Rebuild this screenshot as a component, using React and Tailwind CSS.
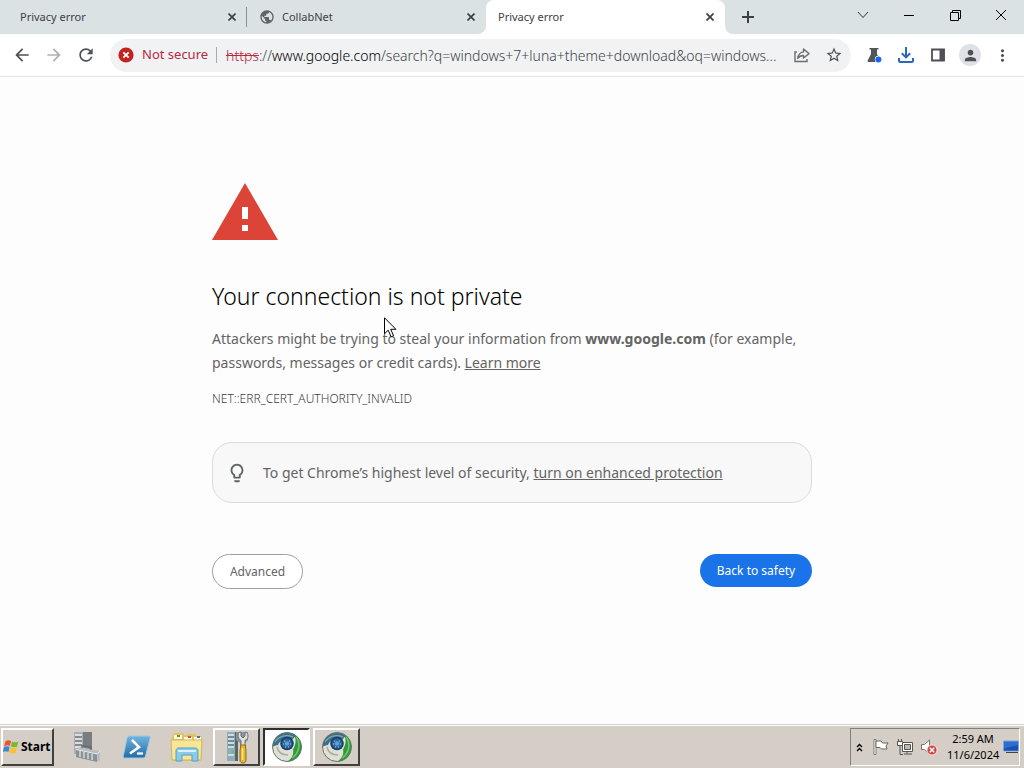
import { useState } from 'react'
import {
  MdArrowBack,
  MdArrowForward,
  MdLightbulbOutline,
  MdMoreVert,
  MdPerson,
  MdPublic,
  MdRefresh,
  MdStarBorder,
} from 'react-icons/md'

const TABS = [
  { id: 1, title: 'Privacy error' },
  { id: 2, title: 'CollabNet', icon: true },
  { id: 3, title: 'Privacy error' },
]

const URL_TEXT = 'https://www.google.com/search?q=windows+7+luna+theme+download&oq=windows+7+luna'

function CloseIcon() {
  return (
    <svg width="8" height="8" viewBox="0 0 8 8" fill="none" stroke="currentColor" strokeWidth="1.7">
      <path d="m.5.5 7 7m0-7-7 7" />
    </svg>
  )
}

function PlusIcon() {
  return (
    <svg width="12" height="12" viewBox="0 0 12 12" fill="none" stroke="currentColor" strokeWidth="2">
      <path d="M6 0v12M0 6h12" />
    </svg>
  )
}

function ShareIcon() {
  return (
    <svg width="18" height="18" viewBox="0 0 18 18" fill="none" stroke="#6b6e72" strokeWidth="1.4">
      <path d="M4 6H2v9.5h12V13" />
      <path d="M10.5 3 16 7.6l-5.5 4.4V9.5c-2.6 0-4.4.8-5.8 2.9.5-3.6 2.3-6 5.8-6.5z" strokeLinejoin="round" />
    </svg>
  )
}

function FlaskIcon() {
  return (
    <svg width="18" height="18" viewBox="0 0 18 18">
      <path d="M4.5 2h9v1.6H12V8l3.300 6.500c.4.900 0 1.500-1 1.500H3.700c-1 0-1.400-.6-1-1.500L6 8V3.600H4.500z" fill="#50565c" />
      <circle cx="13.4" cy="13.4" r="3.6" fill="#fff" />
      <circle cx="13.4" cy="13.4" r="3" fill="#1a66e8" />
    </svg>
  )
}

function DownloadIcon() {
  return (
    <svg width="18" height="18" viewBox="0 0 18 18" fill="none" stroke="#2c67b8" strokeWidth="2">
      <path d="M9 1v10M4.8 7.200 9 11.400l4.200-4.200" />
      <path d="M2 12v2.800c0 .7.4 1.200 1.200 1.200h11.600c.8 0 1.200-.5 1.200-1.200V12" />
    </svg>
  )
}

function PanelIcon() {
  return (
    <svg width="16" height="16" viewBox="0 0 16 16">
      <path d="M2 2.500h12v11H2z" fill="none" stroke="#4d5156" strokeWidth="1.8" />
      <path d="M9.500 2h5v12h-5z" fill="#4d5156" />
    </svg>
  )
}

function CertErrorIcon() {
  return (
    <svg width="16" height="16" viewBox="0 0 16 16">
      <circle cx="8" cy="8" r="7.600" fill="#c5221f" />
      <path d="m5.300 5.300 5.400 5.400m0-5.400-5.400 5.400" stroke="#fff" strokeWidth="1.800" />
    </svg>
  )
}

function Tab({ tab, active, onSelect }) {
  return (
    <div
      className={`relative flex h-[34px] min-w-0 max-w-[239px] flex-1 items-center pl-3 pr-[7px] ${
        active ? 'rounded-t-lg bg-white' : ''
      }`}
    >
      <button
        role="tab"
        aria-selected={active}
        onClick={() => onSelect(tab.id)}
        className="flex h-full min-w-0 flex-1 items-center gap-[7px] text-left text-[11px] text-[#3c4043]"
      >
        {tab.icon && <MdPublic size={16} className="shrink-0 text-[#5f6368]" />}
        <span className="truncate">{tab.title}</span>
      </button>
      <button aria-label={`Close ${tab.title}`} className="flex size-4 items-center justify-center text-[#3c4043]">
        <CloseIcon />
      </button>
      {tab.id === 1 && !active && <span className="absolute right-0 top-[7px] h-5 w-px bg-[#8a9094]" />}
      {active && (
        <>
          <svg className="absolute -left-2 bottom-0" width="8" height="8" viewBox="0 0 8 8">
            <path d="M8 0v8H0a8 8 0 0 0 8-8z" fill="#fff" />
          </svg>
          <svg className="absolute -right-2 bottom-0" width="8" height="8" viewBox="0 0 8 8">
            <path d="M0 0v8h8a8 8 0 0 1-8-8z" fill="#fff" />
          </svg>
        </>
      )}
    </div>
  )
}

function TabStrip() {
  const [activeTab, setActiveTab] = useState(3)

  return (
    <header className="flex h-[34px] bg-[#dbe2e4] pl-2">
      <div role="tablist" className="flex min-w-0 flex-1">
        {TABS.map((tab) => (
          <Tab key={tab.id} tab={tab} active={tab.id === activeTab} onSelect={setActiveTab} />
        ))}
        <button aria-label="New tab" className="ml-[9px] flex w-7 items-center justify-center text-[#3c4043]">
          <PlusIcon />
        </button>
      </div>
      <div className="flex h-[30px]">
        <button aria-label="Search tabs" className="flex w-[46px] items-center justify-center">
          <svg width="12" height="8" viewBox="0 0 12 8" fill="none" stroke="#333">
            <path d="m1 1 5 5.500L11 1" />
          </svg>
        </button>
        <button aria-label="Minimize" className="flex w-[46px] items-center justify-center">
          <span className="h-px w-[10px] bg-black" />
        </button>
        <button aria-label="Restore" className="flex w-[46px] items-center justify-center">
          <svg width="11" height="11" viewBox="0 0 11 11" fill="none" stroke="#000">
            <path d="M.5 2.500h8v8h-8zM2.500 2.500v-2h8v8h-2" />
          </svg>
        </button>
        <button aria-label="Close window" className="flex w-[46px] items-center justify-center">
          <svg width="12" height="12" viewBox="0 0 12 12" fill="none" stroke="#000">
            <path d="m1 1 10 10M11 1 1 11" />
          </svg>
        </button>
      </div>
    </header>
  )
}

function ToolButton({ label, children, className = '' }) {
  return (
    <button
      aria-label={label}
      className={`flex size-7 shrink-0 items-center justify-center rounded-full text-[#4d5156] ${className}`}
    >
      {children}
    </button>
  )
}

function AddressBar() {
  const [editing, setEditing] = useState(false)

  return (
    <div className="ml-[6px] mr-[5px] flex h-[33px] min-w-0 flex-1 items-center rounded-full bg-[#f1f2f3] pl-2 pr-[3px] text-[14px]">
      <button className="flex shrink-0 items-center gap-2 text-[13px] text-[#b8293a]">
        <CertErrorIcon />
        Not secure
      </button>
      <span className="ml-2 mr-[9px] h-4 w-px shrink-0 bg-[#b0a8aa]" />
      {editing ? (
        <input
          autoFocus
          aria-label="Address"
          defaultValue={URL_TEXT}
          onBlur={() => setEditing(false)}
          className="min-w-0 flex-1 bg-transparent font-light outline-none"
        />
      ) : (
        <button
          onClick={() => setEditing(true)}
          className="min-w-0 flex-1 truncate text-left font-light text-[#404448]"
        >
          <span className="text-[#b8293a] line-through">https</span>
          ://<span className="text-black">www.google.com</span>
          /search?q=windows+7+luna+theme+download&oq=windows...
        </button>
      )}
      <div className="flex gap-1">
        <ToolButton label="Share">
          <ShareIcon />
        </ToolButton>
        <ToolButton label="Bookmark">
          <MdStarBorder size={18} />
        </ToolButton>
      </div>
    </div>
  )
}

function Toolbar() {
  return (
    <div className="flex h-[43px] items-center gap-1 border-b border-[#e4e6e8] bg-white px-2">
      <ToolButton label="Back">
        <MdArrowBack size={20} />
      </ToolButton>
      <ToolButton label="Forward" className="opacity-45">
        <MdArrowForward size={20} />
      </ToolButton>
      <ToolButton label="Reload">
        <MdRefresh size={20} />
      </ToolButton>
      <AddressBar />
      <ToolButton label="Labs">
        <FlaskIcon />
      </ToolButton>
      <ToolButton label="Downloads">
        <DownloadIcon />
      </ToolButton>
      <ToolButton label="Side panel">
        <PanelIcon />
      </ToolButton>
      <ToolButton label="Profile">
        <span className="flex size-[22px] items-center justify-center rounded-full bg-[#dfe1e6]">
          <MdPerson size={17} />
        </span>
      </ToolButton>
      <ToolButton label="Menu">
        <MdMoreVert size={19} />
      </ToolButton>
    </div>
  )
}

function Cursor() {
  return (
    <svg className="absolute left-[172px] top-[134px]" width="13" height="21" viewBox="0 0 13 21">
      <path d="M.5.8v16l3.700-3.600 2.900 6.600 2.500-1.100-2.900-6.400h5.200z" fill="#fff" stroke="#000" />
    </svg>
  )
}

function PrivacyError() {
  return (
    <main className="flex-1 bg-[#fdfdfd] px-6 pt-[106px] text-[#646464]">
      <div className="relative mx-auto max-w-[600px]">
        <svg width="66" height="57" viewBox="0 0 66 57">
          <path d="M33 0 66 57H0z" fill="#db4437" />
          <path d="M30 24h6v12h-6zM30 42h6v6h-6z" fill="#fff" />
        </svg>
        <h1 className="mt-10 text-[23px] font-light leading-8 text-black">Your connection is not private</h1>
        <p className="mt-[15px] text-[14px] leading-6">
          Attackers might be trying to steal your information from <strong>www.google.com</strong> (for example,
          passwords, messages or credit cards).{' '}
          <a href="#learn-more" className="underline">
            Learn more
          </a>
        </p>
        <p className="mt-[14px] text-[12px] font-light leading-5 text-[#404040]">NET::ERR_CERT_AUTHORITY_INVALID</p>
        <div className="mt-[33px] flex min-h-[61px] items-center gap-[15px] rounded-[20px] border border-[#dadce0] bg-[#f8f8f8] px-[13px]">
          <MdLightbulbOutline size={22} className="shrink-0 text-[#5f6368]" />
          <p className="text-[14px] leading-6">
            To get Chrome’s highest level of security,{' '}
            <a href="#enhanced-protection" className="underline">
              turn on enhanced protection
            </a>
          </p>
        </div>
        <div className="mt-[51px] flex items-start justify-between text-[12px]">
          <button className="h-[35px] min-w-[91px] rounded-full border border-[#9d9fa3] bg-white px-4">Advanced</button>
          <button className="h-[33px] min-w-[112px] rounded-full bg-[#1a73e8] px-4 text-white">Back to safety</button>
        </div>
        <Cursor />
      </div>
    </main>
  )
}

function WindowsLogo() {
  return (
    <svg width="17" height="16" viewBox="0 0 17 16">
      <path d="M2.500 2.200C4.400.8 6.100.9 8 2L6.800 7C5 6 3.300 6 1.200 7.200z" fill="#e8552a" />
      <path d="M8.900 2.400c2 1.100 4 1.200 6.600 0L14.200 7.400c-2.200 1.100-4.300 1-6.500 0z" fill="#7cb832" />
      <path d="M1 8.100c2-1.200 3.700-1.200 5.600-.1L5.400 13C3.700 12 1.900 11.900 0 13.100z" fill="#3b86d0" />
      <path d="M7.500 8.500c2 1.100 4.200 1.200 6.500 0l-1.300 5.200c-2.300 1.100-4.300 1-6.500-.1z" fill="#fcc22c" />
    </svg>
  )
}

function ServerIcon() {
  return (
    <svg width="30" height="32" viewBox="0 0 30 32">
      <path d="M2 1h9v22H2z" fill="#a9aeb1" />
      <path d="M11 1h9v17h-9z" fill="#777d81" />
      <path d="M3 4h7M3 8h7M3 12h7M3 16h7" stroke="#eceeef" strokeWidth="1.600" />
      <path d="M3 6h7M3 10h7M3 14h7" stroke="#62696e" />
      <path d="M4 18.500 8 16l20 4v9l-3 2-21-5z" fill="#b9bec1" />
      <path d="m4 18.500 21 4.500v8L4 26z" fill="#8b9296" />
      <path d="m4 18.500 21 4.500 3-3" fill="none" stroke="#e8eaeb" />
      <path d="M8 20v6M12 21v6M16 22v6M20 23v6" stroke="#dfe2e3" strokeWidth="1.300" />
      <path d="M10 17v-2.500l9 1.500v3" fill="none" stroke="#666d71" strokeWidth="1.400" />
    </svg>
  )
}

function PowerShellIcon() {
  return (
    <svg width="30" height="26" viewBox="0 0 30 26">
      <defs>
        <linearGradient id="ps" x1="0" y1="0" x2="0" y2="1">
          <stop offset="0" stopColor="#72b4dc" />
          <stop offset="1" stopColor="#216da9" />
        </linearGradient>
      </defs>
      <path d="M6.500 2h20c1.300 0 2 .9 1.700 2.100l-4.700 18c-.3 1.200-1.300 1.900-2.500 1.900H3c-1.300 0-2-.9-1.700-2.100L5 4z" fill="url(#ps)" stroke="#9ccbe6" />
      <path d="m10 6 7 7-9 6.500" fill="none" stroke="#fff" strokeWidth="2.600" />
      <path d="M15 19.500h6" stroke="#fff" strokeWidth="2.200" />
    </svg>
  )
}

function ExplorerIcon() {
  return (
    <svg width="34" height="32" viewBox="0 0 34 32">
      <path d="M2 6 4 2h9l2 3 3-2h7l2 2h5v22l-2 3H2z" fill="#e3c260" />
      <path d="M4 4h8v4H4zM14 6h8v3h-8zM24 6h7v3h-7z" fill="#fff7da" />
      <path d="M7 4h3v2H7z" fill="#4f9b57" />
      <path d="M18 5h3v2h-3z" fill="#c9534a" />
      <path d="M27 5h3v2h-3z" fill="#3c78b5" />
      <path d="M1 9h31l-1 20H2z" fill="#f8e697" stroke="#d2b65a" />
      <path d="M6 30V20c0-2 1-3 3-3h16c2 0 3 1 3 3v10h-6v-6H12v6z" fill="#89cbe9" stroke="#569dc4" />
      <path d="M8 20h18" stroke="#d6f2fb" strokeWidth="2" />
    </svg>
  )
}

function ServerManagerIcon() {
  return (
    <svg width="26" height="34" viewBox="0 0 26 34">
      <path d="M3 2h8v29H3z" fill="#8fadb9" />
      <path d="M11 2h3v29h-3z" fill="#56646c" />
      <path d="M4 5h6M4 9h6M4 13h6M4 17h6M4 25h6" stroke="#e2ecef" strokeWidth="1.600" />
      <path d="M4 7h6M4 11h6M4 15h6" stroke="#4a6672" />
      <circle cx="9" cy="22" r="1.300" fill="#71c04b" />
      <path d="M12 2h12v8l-3 3v4h-5v-4l-4-3z" fill="#8f9496" />
      <path d="M14 5c0-2 1-3 3-3v4l2 2 2-2V2c2 0 3 2 3 4 0 2-1 3.500-3 4.500V16h-4v-5.500c-2-1-3-3-3-5.500z" fill="#dfe1e2" stroke="#666d70" />
      <path d="M16.500 15h5v3l.5 2v10c0 2-1.200 3-3 3s-3-1-3-3V20l.5-2z" fill="#e8b52c" stroke="#8e6c18" />
      <path d="M18.500 18v12" stroke="#fce78c" strokeWidth="1.500" />
    </svg>
  )
}

function CollabNetIcon() {
  return (
    <svg width="32" height="32" viewBox="0 0 32 32">
      <circle cx="16" cy="16" r="14.500" fill="#e0e0d6" />
      <path d="M1.500 16C1.500 8 8 1.500 16 1.500c4 0 7 1 9 3L21 9C14 7 9 9 7 14c-2 0-4 1-5.500 2z" fill="#3c6f88" />
      <path d="M4 11c4-6 11-8 18-5" fill="none" stroke="#80a9b7" strokeWidth="1.200" />
      <path d="M23 3.200c5 3 7.500 7.500 7.500 12.800 0 8-6 14.500-14 14.500 5-3.500 6.500-8 5.500-12 3-5 3.500-10 1-15.300z" fill="#2e9a3c" />
      <path d="M25.500 6c4 7 3 15-4 21" fill="none" stroke="#73c46b" strokeWidth="1.600" />
      <path d="M6 16c1 5 5 8 11 8" fill="none" stroke="#a9aca0" strokeWidth="1.400" />
      <circle cx="16" cy="16" r="14.500" fill="none" stroke="#66756c" />
      <circle cx="16" cy="12.500" r="6.800" fill="#173f6b" />
      <circle cx="16" cy="12.500" r="5" fill="#2b669f" />
      <circle cx="16" cy="12.500" r="2.200" fill="#64a2cd" />
      <path d="M13 10h1M18 10h1M12 13h1M19 13h1M14 16h1M17 16h1" stroke="#a6d0e8" />
    </svg>
  )
}

const RAISED = 'border-2 border-t-white border-l-white border-b-[#404040] border-r-[#404040]'

const TASKS = [
  { name: 'Server', icon: ServerIcon, style: '' },
  { name: 'PowerShell', icon: PowerShellIcon, style: '' },
  { name: 'Explorer', icon: ExplorerIcon, style: '' },
  { name: 'Server Manager', icon: ServerManagerIcon, style: RAISED },
  {
    name: 'Browser',
    icon: CollabNetIcon,
    style: 'bg-white border-2 border-t-[#303030] border-l-[#303030] border-b-white border-r-white',
  },
  { name: 'Browser 2', icon: CollabNetIcon, style: RAISED },
]

function Tray() {
  return (
    <div className="ml-auto mr-1 flex items-center border border-b-white border-l-[#808080] border-r-white border-t-[#808080] pl-1 text-[11px] text-black">
      <button aria-label="Show hidden icons" className="flex w-2 justify-center">
        <svg width="7" height="9" viewBox="0 0 7 9" fill="none" stroke="#000" strokeWidth="1.300">
          <path d="m1 4 2.500-2.500L6 4M1 8l2.500-2.500L6 8" />
        </svg>
      </button>
      <button aria-label="Action center" className="ml-2 flex w-5 justify-center">
        <svg width="18" height="18" viewBox="0 0 18 18">
          <path d="M2 1.500h2v15H2z" fill="#fff" stroke="#686460" strokeWidth=".8" />
          <path d="M4 3h5l1.500 2H16l-2 3 1 3H9.500L8 9.500H4z" fill="#fff" stroke="#686460" />
        </svg>
      </button>
      <button aria-label="Network" className="ml-1 flex w-5 justify-center">
        <svg width="18" height="18" viewBox="0 0 18 18" stroke="#55524f" fill="#fff">
          <path d="M6.500 4.500h10v9h-10z" />
          <path d="M8.500 6.500h6v5h-6z" fill="#bdb9b4" />
          <path d="M11 13.500v2M8 16h8" />
          <path d="M1.500 3.500h5v4h-5zM2.500 1v2M5.500 1v2" />
          <path d="M4 7.500v9h3" fill="none" />
        </svg>
      </button>
      <button aria-label="Volume muted" className="ml-1 flex w-5 justify-center">
        <svg width="18" height="18" viewBox="0 0 18 18">
          <path d="M1.500 6.500h3L9.500 2v14l-5-4.500h-3z" fill="#fff" stroke="#77726e" />
          <circle cx="12" cy="12" r="5" fill="#d64545" stroke="#fff" strokeWidth=".7" />
          <path d="m9.800 9.800 4.400 4.400m0-4.400-4.400 4.400" stroke="#fff" strokeWidth="1.500" />
        </svg>
      </button>
      <time className="ml-2 w-[52px] text-center leading-4">
        2:59 AM
        <br />
        11/6/2024
      </time>
      <button aria-label="Show desktop" className="ml-1">
        <svg width="16" height="14" viewBox="0 0 16 14">
          <path d="M.5 1h15v10H.5z" fill="#2c6ed0" stroke="#75a5e5" />
          <path d="M1 8.500 15 5v5.500H1z" fill="#1a51ad" />
          <path d="M3 12.500h12" stroke="#444" />
        </svg>
      </button>
    </div>
  )
}

function Taskbar() {
  return (
    <footer className="flex h-11 border-t border-[#d4d0c8] bg-[#d5cec6] shadow-[inset_0_1px_0_#fff]">
      <div className="flex w-full pb-0.5 pt-[3px]">
        <button className={`ml-px mr-[9px] flex w-[53px] items-center gap-px text-[12px] font-bold text-black ${RAISED}`}>
          <WindowsLogo />
          Start
        </button>
        <nav className="flex gap-[3px]">
          {TASKS.map(({ name, icon: Icon, style }) => (
            <button key={name} aria-label={name} className={`flex w-[47px] items-center justify-center ${style}`}>
              <Icon />
            </button>
          ))}
        </nav>
        <Tray />
      </div>
    </footer>
  )
}

export default function App() {
  return (
    <div className="flex min-h-screen flex-col bg-white font-['Noto_Sans','Open_Sans',sans-serif]">
      <TabStrip />
      <Toolbar />
      <PrivacyError />
      <Taskbar />
    </div>
  )
}
